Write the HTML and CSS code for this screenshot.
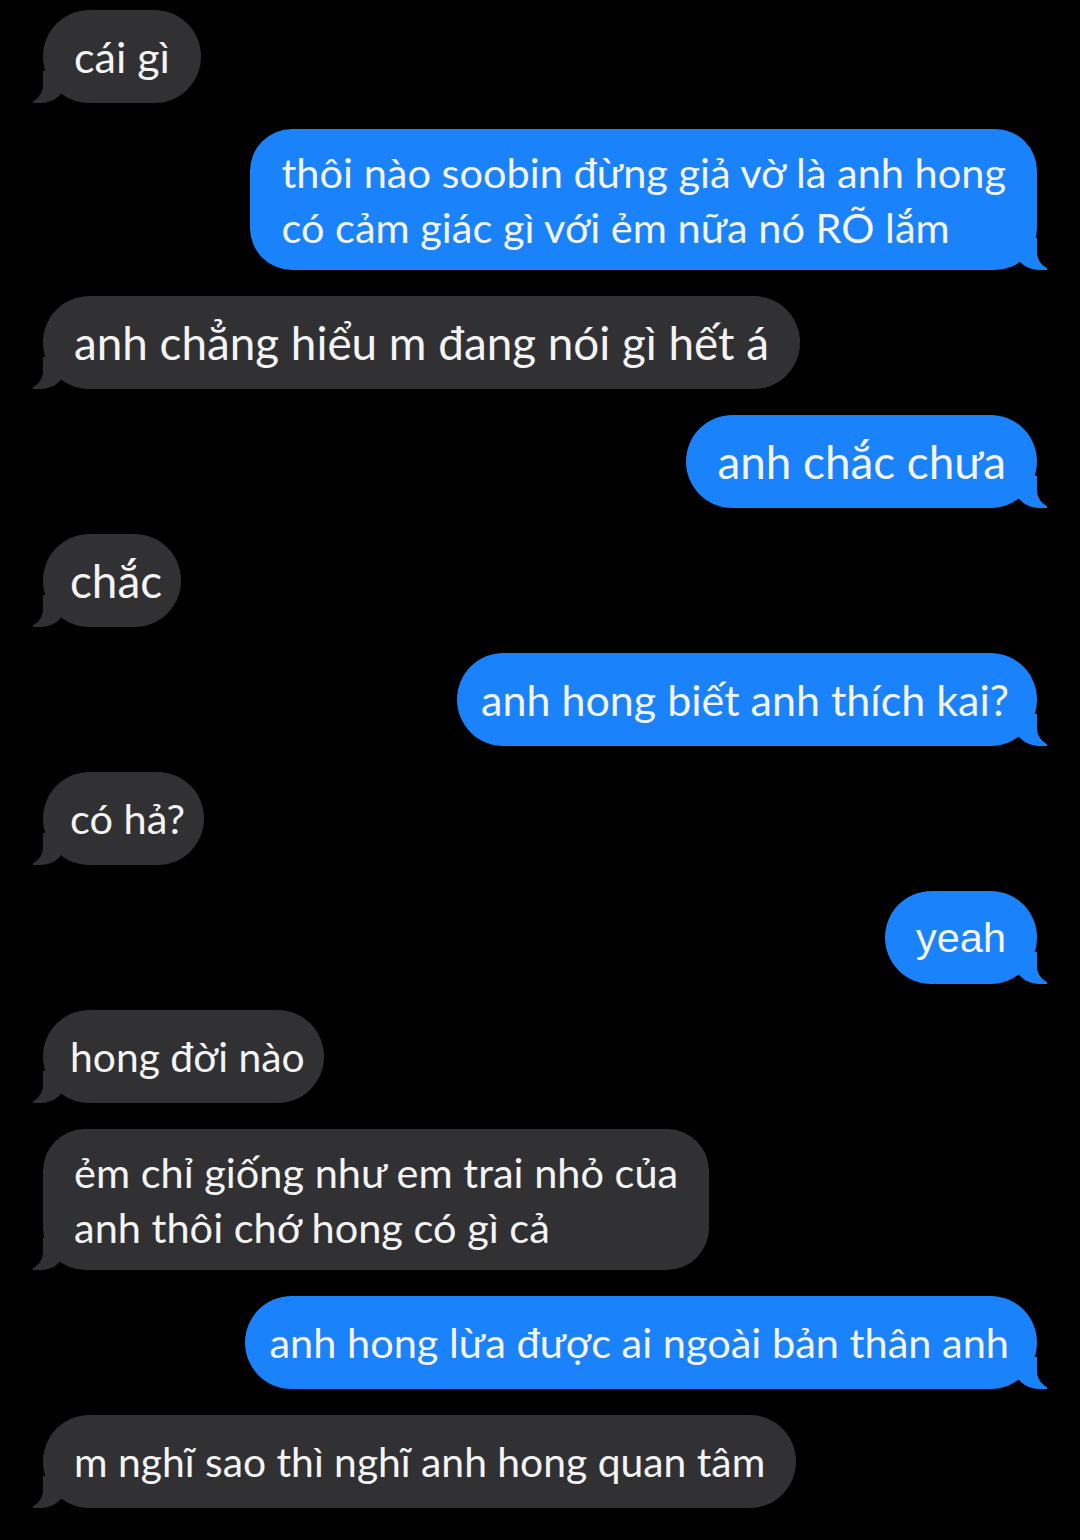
FILE: index.html
```html
<!DOCTYPE html>
<html lang="vi">
<head>
    <meta charset="UTF-8">
    <meta name="viewport" content="width=device-width, initial-scale=1.0">
    <title>Messages</title>
    <link rel="stylesheet" href="styles.css">
</head>
<body>
    <div class="thread">
        <div class="bubble them md">cái gì</div>
        <div class="bubble me multi">thôi nào soobin đừng giả vờ là anh hong<br>có cảm giác gì với ẻm nữa nó RÕ lắm</div>
        <div class="bubble them lg">anh chẳng hiểu m đang nói gì hết á</div>
        <div class="bubble me lg">anh chắc chưa</div>
        <div class="bubble them lg snug">chắc</div>
        <div class="bubble me md snug">anh hong biết anh thích kai?</div>
        <div class="bubble them snug">có hả?</div>
        <div class="bubble me latin">yeah</div>
        <div class="bubble them sm snug">hong đời nào</div>
        <div class="bubble them multi">ẻm chỉ giống như em trai nhỏ của<br>anh thôi chớ hong có gì cả</div>
        <div class="bubble me snug">anh hong lừa được ai ngoài bản thân anh</div>
        <div class="bubble them sm">m nghĩ sao thì nghĩ anh hong quan tâm</div>
    </div>
</body>
</html>
```

FILE: styles.css
```css
/* Dark chat thread */
body {
    margin: 0;
    padding: 0;
    background-color: #000;
    font-family: 'Lato', 'Noto Sans', sans-serif;
}

.thread {
    display: flex;
    flex-direction: column;
    gap: 26px;
    padding: 10px 43px 0 43px;
}

.bubble {
    position: relative;
    padding: 19px 31px;
    font-size: 41.5px;
    line-height: 55px;
    color: #f4f4f4;
    border-radius: 47px;
    white-space: nowrap;
}

.bubble.sm {
    font-size: 40.8px;
}

.bubble.md {
    font-size: 43px;
}

.bubble.lg {
    font-size: 45.8px;
}

.them.snug {
    padding-left: 27px;
    padding-right: 19px;
}

.me.snug {
    padding-left: 24px;
    padding-right: 28px;
}

.bubble.multi {
    padding-top: 16px;
    padding-bottom: 15px;
    border-radius: 42px;
}

.latin {
    font-family: 'Liberation Sans', Arial, sans-serif;
}

/* Incoming (grey, left) */
.them {
    align-self: flex-start;
    background-color: #313133;
}

.them::before {
    content: "";
    position: absolute;
    bottom: 0;
    left: -10px;
    width: 34px;
    height: 32px;
    background-color: #313133;
    border-bottom-right-radius: 26px;
}

.them::after {
    content: "";
    position: absolute;
    bottom: 0;
    left: -22px;
    width: 22px;
    height: 32px;
    background-color: #000;
    border-bottom-right-radius: 18px;
}

/* Outgoing (blue, right) */
.me {
    align-self: flex-end;
    background-color: #1a82fb;
}

.me::before {
    content: "";
    position: absolute;
    bottom: 0;
    right: -10px;
    width: 34px;
    height: 32px;
    background-color: #1a82fb;
    border-bottom-left-radius: 26px;
}

.me::after {
    content: "";
    position: absolute;
    bottom: 0;
    right: -22px;
    width: 22px;
    height: 32px;
    background-color: #000;
    border-bottom-left-radius: 18px;
}
```
